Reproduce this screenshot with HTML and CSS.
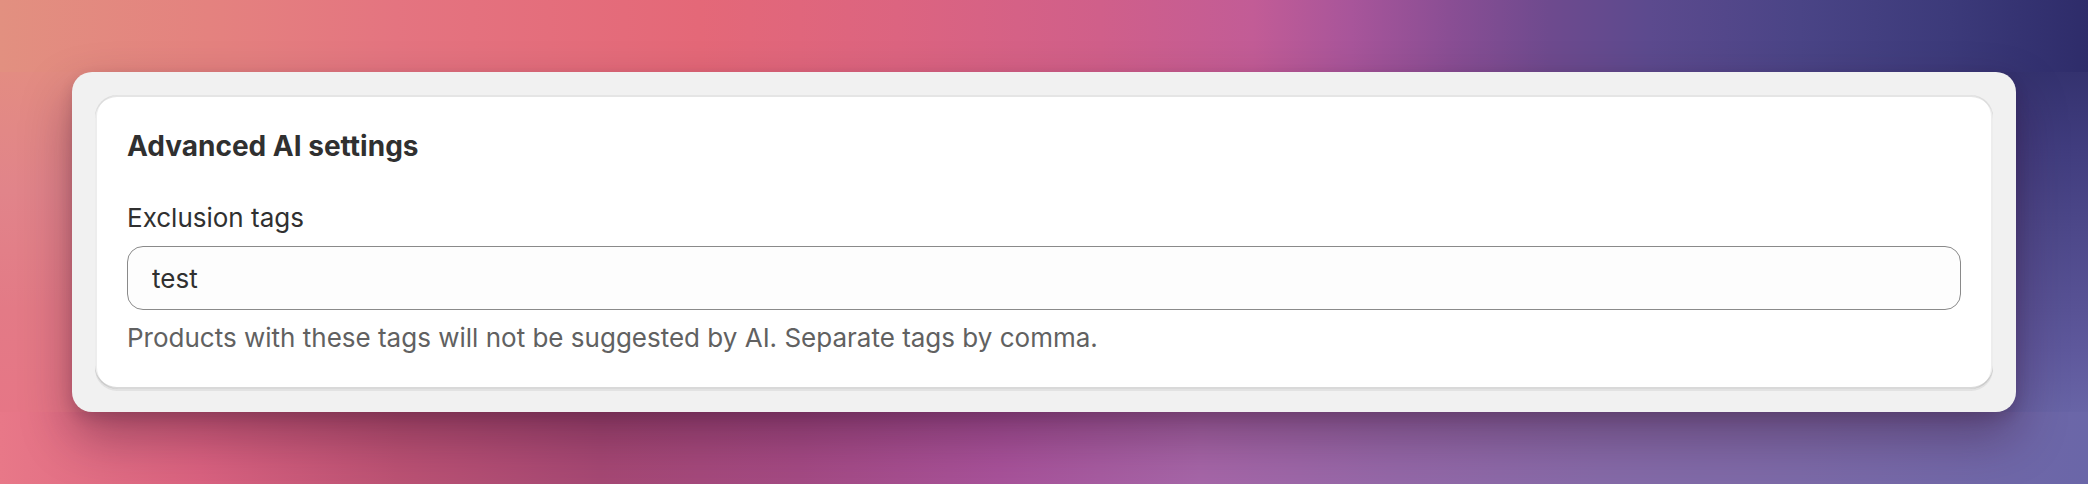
FILE: index.html
```html
<!DOCTYPE html>
<html lang="en">
<head>
<meta charset="utf-8">
<title>Advanced AI settings</title>
<link rel="stylesheet" href="styles.css">
</head>
<body>
<main class="stage">
  <section class="frame">
    <div class="card">
      <h2 class="card-title">Advanced AI settings</h2>
      <div class="field">
        <label class="field-label" for="tags">Exclusion tags</label>
        <div class="input-wrap">
          <input class="text-input" id="tags" type="text" value="test">
        </div>
        <p class="help-text">Products with these tags will not be suggested by AI. Separate tags by comma.</p>
      </div>
    </div>
  </section>
</main>
</body>
</html>
```

FILE: styles.css
```css
* { box-sizing: border-box; }

html, body {
  margin: 0;
  width: 2088px;
  height: 484px;
  overflow: hidden;
}

body {
  font-family: Inter, "Noto Sans", "Liberation Sans", sans-serif;
  color: #303030;
  background:
    linear-gradient(90deg, #e29080 0%, #e4827f 10%, #e47480 19%, #e46878 33.5%, #dc6480 43%, #d05f8a 52.7%, #c25c96 60%, #a8559a 64.7%, #8a4e94 69.4%, #6e4a8e 74.2%, #5c4a8e 79%, #4a4486 86.2%, #3c3a7a 93.4%, #2e2c6a 100%) left top / 100% 72px no-repeat,
    linear-gradient(90deg, #e87888 0%, #da6280 9.6%, #bc5274 19%, #a64874 28.7%, #a44a84 38.3%, #a8529a 47.9%, #a666a8 57.5%, #9468a8 67%, #866aa8 76.6%, #7c6aa8 86.2%, #6a66a8 100%) left bottom / 100% 72px no-repeat,
    linear-gradient(to bottom, #34326f 0%, #403c7e 22%, #4c4789 45%, #585295 70%, #5e589c 82%, #6864a6 100%) right 72px / 110px 340px no-repeat,
    linear-gradient(to bottom, #e38c82 0%, #e1848a 35%, #e37a86 70%, #e67686 100%) left 72px / 110px 340px no-repeat,
    linear-gradient(90deg, #d8607f 0%, #b0558f 50%, #5a5495 100%);
}

.stage {
  padding: 72px;
}

.frame {
  background: #f1f1f1;
  border-radius: 20px;
  padding: 23px;
  box-shadow: 0 24px 50px rgba(50, 10, 40, 0.38), 0 6px 14px rgba(50, 10, 40, 0.16);
}

.card {
  background: #ffffff;
  border-radius: 22px;
  padding: 31px 32px 31px;
  box-shadow:
    0 2px 0 rgba(26, 26, 26, 0.07),
    inset 0 -2px 0 rgba(0, 0, 0, 0.15),
    inset 0 2px 0 rgba(204, 204, 204, 0.5),
    inset 2px 0 0 rgba(0, 0, 0, 0.07),
    inset -2px 0 0 rgba(0, 0, 0, 0.07);
}

.card-title {
  margin: 0;
  font-size: 28px;
  line-height: 40px;
  font-weight: 650;
  color: #303030;
}

.field {
  margin-top: 32px;
  display: flex;
  flex-direction: column;
}

.field-label {
  font-size: 26px;
  line-height: 40px;
  color: #303030;
  margin-bottom: 8px;
}

.input-wrap {
  display: flex;
}

.text-input {
  flex: 1;
  height: 64px;
  border: 1.3px solid #8a8a8a;
  border-radius: 16px;
  background: #fdfdfd;
  padding: 0 24px;
  font-family: inherit;
  font-size: 26px;
  color: #303030;
  outline: none;
}

.help-text {
  margin: 8px 0 0;
  font-size: 26px;
  line-height: 40px;
  color: #616161;
}
```
